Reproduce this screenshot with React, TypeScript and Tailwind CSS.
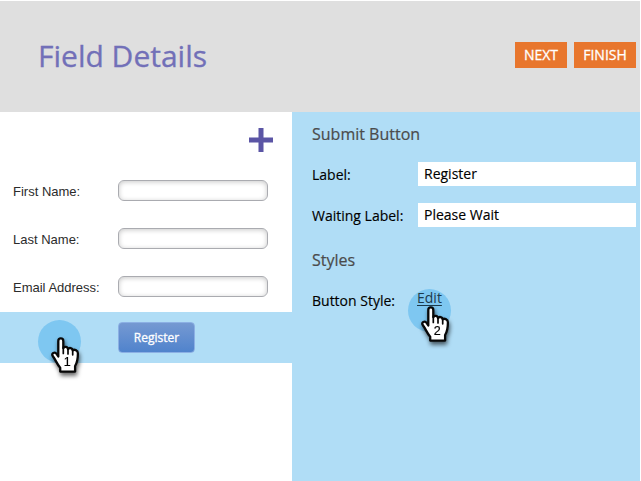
import React from "react";

function PointerMarker({ label, className }: { label: string; className: string }) {
  return (
    <div className={`absolute h-[43px] w-[43px] ${className}`}>
      <div className="h-full w-full rounded-full bg-[#55b5ec]/55" />
      <svg
        className="absolute left-[10px] top-[15px] overflow-visible drop-shadow-[1px_3px_2px_rgba(0,0,0,0.6)]"
        width="34"
        height="40"
        viewBox="0 0 34 40"
      >
        <path
          d="M10.3 21.5V6C10.3 2.6 15.3 2.6 15.3 6V13.2C15.7 11.2 19.6 11.3 20 14C21.2 12.3 24.4 12.8 24.7 15.3C26 14.2 30 15 29.9 18.5C29.9 25 29.3 27.5 27.1 31V36.6H12.2V32.7C8.8 29 7.8 25 4.7 21C3 18.3 6.8 16.3 8.6 18.8Z"
          fill="#fff"
          stroke="#080808"
          strokeWidth="2.3"
          strokeLinejoin="round"
        />
        <path d="M15.3 12V18.5M20 13.5V19M24.7 15V19.8" fill="none" stroke="#080808" strokeWidth="1.7" strokeLinecap="round" />
        <text
          x="19.3"
          y="30.6"
          textAnchor="middle"
          stroke="#000"
          strokeWidth="0.2"
          className="fill-black font-['Liberation_Sans',sans-serif] text-[12.5px]"
        >
          {label}
        </text>
      </svg>
    </div>
  );
}

function FormRow({ label }: { label: string }) {
  return (
    <div className="flex h-12 items-center pl-[13px]">
      <label className="w-[105px] shrink-0 pt-[4px] font-['Liberation_Sans',sans-serif] text-[13px] text-[#2b2b2b]">{label}</label>
      <div className="h-[21px] w-[150px] rounded-[6px] border border-[#aaabb0] bg-white shadow-[inset_0_1px_5px_rgba(0,0,0,0.22)]" />
    </div>
  );
}

function SettingRow({ label, value }: { label: string; value: string }) {
  return (
    <div className="flex h-6 items-center">
      <label className="w-[106px] shrink-0">{label}</label>
      <div className="h-6 w-[218px] bg-white pl-[6px] leading-[23px]">{value}</div>
    </div>
  );
}

export default function App() {
  return (
    <div className="flex h-[481px] w-[641px] flex-col overflow-hidden bg-white pr-px pt-px font-['Open_Sans',sans-serif]">
      <header className="flex h-[111px] shrink-0 items-center justify-between bg-[#dfdfdf] pl-[38px] pr-1">
        <h1 className="mb-[2px] text-[30px] leading-none text-[#7270b8] [-webkit-text-stroke:0.3px_#7270b8]">Field Details</h1>
        <div className="mb-1 flex gap-[7px] text-[14px] text-white [-webkit-text-stroke:0.3px_#fff]">
          <button className="h-[26px] w-[52px] bg-[#e8762d]">NEXT</button>
          <button className="h-[26px] w-[62px] bg-[#e8762d]">FINISH</button>
        </div>
      </header>
      <main className="flex flex-1">
        <section className="w-[292px] shrink-0">
          <div className="flex h-[54px] justify-end pr-[19px] pt-[16px]">
            <svg width="24" height="24" viewBox="0 0 24 24">
              <path d="M0 12H24M12 0V24" stroke="#5b55a5" strokeWidth="5" />
            </svg>
          </div>
          <FormRow label="First Name:" />
          <FormRow label="Last Name:" />
          <FormRow label="Email Address:" />
          <div className="relative mt-[2px] flex h-[51px] items-center bg-[#b0ddf6] pl-[118px]">
            <button className="h-[31px] w-[77px] rounded-[4px] border border-[#8cb0e4] bg-linear-to-b from-[#7599d2] to-[#5083cc] text-[12px] text-white [-webkit-text-stroke:0.3px_#fff]">
              Register
            </button>
            <PointerMarker label="1" className="left-[38px] top-[8px]" />
          </div>
        </section>
        <section className="flex-1 bg-[#b0ddf6] pl-[20px] pt-[10px] text-[14px] text-black">
          <h2 className="h-10 text-[16px] leading-6 text-[#4b4b4b] [-webkit-text-stroke:0.2px_#4b4b4b]">Submit Button</h2>
          <div className="flex flex-col gap-[17px] [-webkit-text-stroke:0.15px_#000]">
            <SettingRow label="Label:" value="Register" />
            <SettingRow label="Waiting Label:" value="Please Wait" />
          </div>
          <h2 className="mt-[21px] h-10 text-[16px] leading-6 text-[#4b4b4b] [-webkit-text-stroke:0.2px_#4b4b4b]">Styles</h2>
          <div className="relative flex">
            <span className="w-[105px] pt-[3px] leading-[20px] [-webkit-text-stroke:0.15px_#000]">Button Style:</span>
            <a href="#" className="relative z-10 leading-[20px] text-[#1c3a4c] underline underline-offset-2">Edit</a>
            <PointerMarker label="2" className="left-[96px] top-[1px]" />
          </div>
        </section>
      </main>
    </div>
  );
}
